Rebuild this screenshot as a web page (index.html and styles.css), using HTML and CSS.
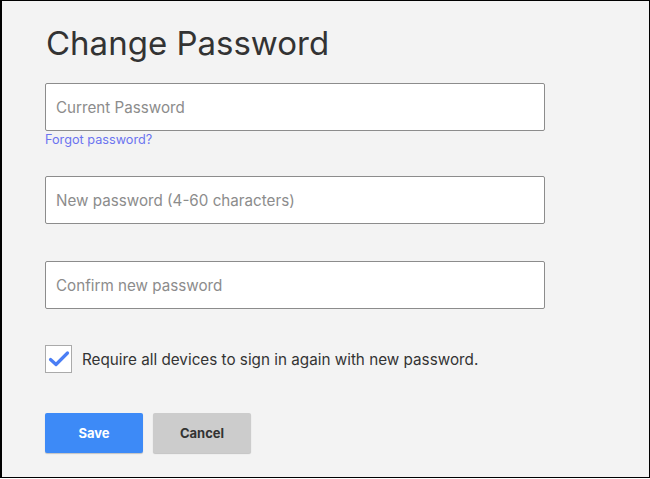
FILE: index.html
```html
<!DOCTYPE html>
<html>
<head>
<meta charset="utf-8">
<link rel="stylesheet" href="styles.css">
</head>
<body>
<div class="frame">
  <div class="content">
    <h1 class="title">Change Password</h1>
    <div class="field first">
      <div class="input"><span class="ph">Current Password</span></div>
      <a class="forgot">Forgot password?</a>
    </div>
    <div class="field">
      <div class="input"><span class="ph">New password (4-60 characters)</span></div>
    </div>
    <div class="field">
      <div class="input"><span class="ph">Confirm new password</span></div>
    </div>
    <label class="check-row">
      <span class="checkbox">
        <svg width="22" height="18" viewBox="0 0 22 18"><path d="M2.5 9.5 L8 14.5 L19.5 3" fill="none" stroke="#4a7ef5" stroke-width="3.2" stroke-linecap="round" stroke-linejoin="round"/></svg>
      </span>
      <span class="check-label">Require all devices to sign in again with new password.</span>
    </label>
    <div class="buttons">
      <button class="btn save">Save</button>
      <button class="btn cancel">Cancel</button>
    </div>
  </div>
</div>
</body>
</html>
```
FILE: styles.css
```css
html, body {
  margin: 0;
  padding: 0;
  background: #fff;
}
.frame {
  width: 647px;
  height: 476px;
  border-top: 1px solid #000;
  border-bottom: 1px solid #000;
  border-left: 2px solid #000;
  border-right: 1px solid #000;
  background: #f3f3f3;
  font-family: Inter, "Liberation Sans", sans-serif;
  color: #333;
}
.content {
  padding-left: 43px;
  padding-top: 19px;
  display: flex;
  flex-direction: column;
  width: 500px;
}
.title {
  margin: 0;
  font-size: 33px;
  font-weight: 400;
  line-height: 46px;
  color: #333;
  padding-left: 1px;
}
.field {
  display: flex;
  flex-direction: column;
  height: 85px;
}
.field.first {
  margin-top: 17px;
  height: 93px;
}
.input {
  box-sizing: border-box;
  height: 48px;
  width: 500px;
  background: #fff;
  border: 1px solid #8c8c8c;
  border-radius: 2px;
  display: flex;
  align-items: center;
  padding-left: 10px;
}
.ph {
  font-size: 15.2px;
  color: #8c8c8c;
}
.forgot {
  font-size: 12.7px;
  color: #6b73f0;
  margin-top: 2px;
  line-height: 14px;
}
.check-row {
  display: flex;
  align-items: center;
  gap: 10px;
  margin-top: -1px;
}
.checkbox {
  box-sizing: border-box;
  width: 27px;
  height: 28px;
  border: 1px solid #aaa;
  background: #fff;
  display: flex;
  align-items: center;
  justify-content: center;
}
.check-label {
  font-size: 15.25px;
  color: #333;
}
.buttons {
  display: flex;
  gap: 10px;
  margin-top: 40px;
}
.btn {
  width: 98px;
  height: 40px;
  border: none;
  border-radius: 2px;
  font-family: Inter, "Liberation Sans", sans-serif;
  font-size: 13px;
  font-weight: 700;
  box-shadow: 0 1px 1px rgba(0,0,0,0.2);
}
.save {
  background: #3d8af7;
  color: #fff;
}
.cancel {
  background: #cccccc;
  color: #333;
}
```
